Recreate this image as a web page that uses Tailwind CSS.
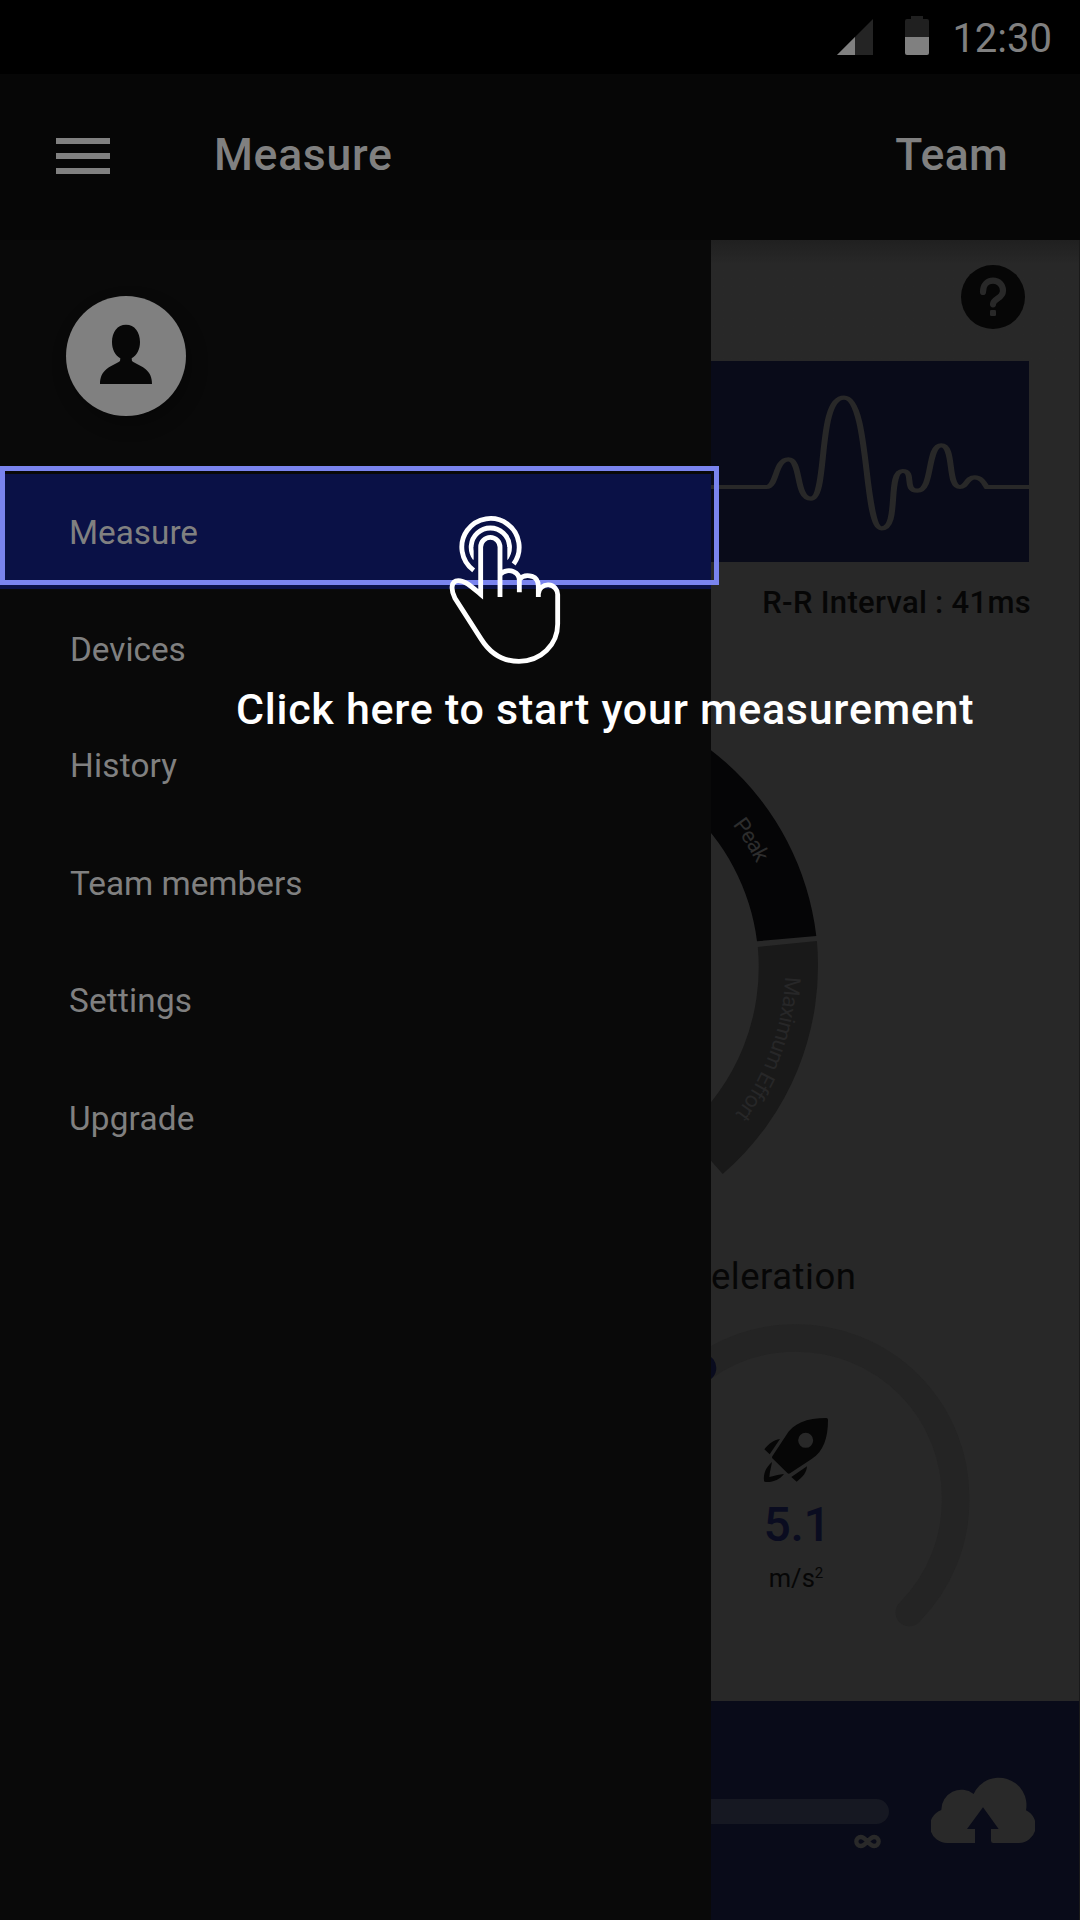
<!DOCTYPE html>
<html lang="en">
<head>
<meta charset="utf-8">
<title>Measure</title>
<script src="https://cdn.jsdelivr.net/npm/@tailwindcss/browser@4"></script>
</head>
<body class="bg-black">
<div class="relative flex h-[1920px] w-[1080px] flex-col overflow-hidden bg-black font-['Roboto',sans-serif] text-[#808080]">

  <!-- Status bar -->
  <div class="flex h-[74px] shrink-0 items-center justify-end pr-[28px]">
    <svg class="h-[36px] w-[36px]" viewBox="0 0 36 36"><path d="M0 36 36 0V36Z" fill="#242424"/><path d="M0 36 18 18V36Z" fill="#808080"/></svg>
    <svg class="-mt-[3px] ml-[32px] h-[39px] w-[24px]" viewBox="0 0 24 39"><path d="M6 0H18V3H22Q24 3 24 5V21H0V5Q0 3 2 3H6Z" fill="#202020"/><path d="M0 21H24V37Q24 39 22 39H2Q0 39 0 37Z" fill="#808080"/></svg>
    <span class="ml-[23px] pt-[4px] text-[40px] leading-[70px]">12:30</span>
  </div>

  <!-- App bar -->
  <header class="flex h-[166px] shrink-0 items-center bg-[#060606] pb-[2px] pl-[56px] pr-[72px] text-[44.5px] font-medium leading-none tracking-[0.7px]">
    <div class="flex w-[54px] flex-col gap-[9px]">
      <i class="h-[6px] bg-[#808080]"></i><i class="h-[6px] bg-[#808080]"></i><i class="h-[6px] bg-[#808080]"></i>
    </div>
    <h1 class="-mt-[2px] ml-[104px]">Measure</h1>
    <span class="-mt-[2px] ml-auto tracking-[0.3px]">Team</span>
  </header>

  <div class="flex flex-1">
    <!-- Drawer -->
    <aside class="w-[711px] shrink-0 bg-[#090909]">
      <div class="mt-[56px] ml-[66px] size-[120px] rounded-full bg-[#808080] shadow-[4px_8px_18px_rgba(0,0,0,0.3)]">
        <svg class="size-[120px]" viewBox="198 708 360 360" fill="#070707"><path d="M378 794C404 794 420 816 420 846C420 868 411 886 395 895Q394 903 400 906C412 914 428 919 437 928C450 939 456 953 456 972H300C300 953 306 939 319 928C328 919 344 914 356 906Q362 903 361 895C345 886 336 868 336 846C336 816 352 794 378 794Z"/></svg>
      </div>
      <nav class="mt-[58px] text-[33.3px]">
        <a class="flex h-[115px] items-center bg-[#0a1146] pt-[2px] pl-[69px]">Measure</a>
        <a class="flex h-[117px] items-center pt-[4px] pl-[70px]">Devices</a>
        <a class="flex h-[117px] items-center pt-[2px] pl-[70px] tracking-[0.2px]">History</a>
        <a class="flex h-[117px] items-center pt-[4px] pl-[70px]">Team members</a>
        <a class="flex h-[118px] items-center pt-[4px] pl-[69px] tracking-[0.2px]">Settings</a>
        <a class="flex h-[117px] items-center pt-[4px] pl-[69px] tracking-[0.2px]">Upgrade</a>
      </nav>
    </aside>

    <!-- Dashboard -->
    <main class="flex w-[369px] flex-col overflow-hidden border-r border-[#1a1a1a] bg-[#282828] text-[#060606]">
      <div class="flex h-[121px] shrink-0 justify-end bg-linear-to-b from-[#202020] to-[#282828] to-20% pt-[25px] pr-[54px]">
        <svg class="size-[64px]" viewBox="783 105 192 192"><circle cx="879" cy="201" r="96" fill="#060606"/><path d="M849 186C849 164 862 152 879 152S909 165 909 182C909 207 879 204 879 223" fill="none" stroke="#282828" stroke-width="18.500" stroke-linecap="round"/><rect x="870" y="240" width="18" height="18" rx="4" fill="#282828"/></svg>
      </div>
      <svg class="h-[201px] w-[318px] shrink-0 bg-[#090b19]" viewBox="33 393 954 603"><path transform="scale(1.45 1)" d="M22 771H137.900C158.600 771 155.200 688 182.800 688C210.300 688 196.600 806 229.700 806C265.500 806 241.400 503 297.900 503C351.700 503 337.900 895 375.900 895C413.800 895 386.200 723 419.300 723C444.800 723 420.700 782 449.700 782C482.800 782 469 646 499.300 646C527.600 646 510.300 771 537.900 771C551.700 771 551.700 742 568.300 742C580.700 742 586.200 755 593.100 771H681" fill="none" stroke="#282828" stroke-width="12.500"/></svg>
      <p class="mt-[21px] pr-[48px] text-right text-[31px] font-medium leading-[40px] tracking-[0.3px] whitespace-nowrap">R-R Interval : 41ms</p>

      <svg class="mt-[107px] h-[460px] w-[130px] shrink-0" viewBox="711 730 130 460">
        <path d="M543 693A275 275 0 0 1 816.300 936L757 941.300A215 215 0 0 0 543 753Z" fill="#050506"/>
        <path d="M816.900 941A275 275 0 0 1 722.700 1174L684 1130A215 215 0 0 0 757.800 947Z" fill="#191919"/>
        <path id="peak" d="M732.400 824.500A238.500 238.500 0 0 1 781.500 968" fill="none"/>
        <path id="effort" d="M785 976.500A241.500 241.500 0 0 1 700 1151" fill="none"/>
        <text font-size="22" fill="#2d2d2d" textLength="46"><textPath href="#peak">Peak</textPath></text>
        <text font-size="22" fill="#272728" textLength="149"><textPath href="#effort">Maximum Effort</textPath></text>
      </svg>

      <p class="mt-[64px] w-[144px] text-right text-[36.5px] leading-[46px] tracking-[0.5px]">eleration</p>

      <div class="relative mt-[20px] h-[320px] w-[270px]">
        <svg class="absolute inset-0 h-[320px] w-[270px]" viewBox="711 1320 270 320" fill="none"><path d="M702.300 1368A159.300 159.300 0 0 1 796.300 1338A159.300 159.300 0 0 1 955.600 1498A159.300 159.300 0 0 1 909.300 1612.500" stroke="#242424" stroke-width="27.500" stroke-linecap="round"/><path d="M702.300 1368A159.300 159.300 0 0 0 684 1384" stroke="#090b1e" stroke-width="28" stroke-linecap="round"/></svg>
        <div class="relative flex w-[170px] flex-col items-center pt-[97px]">
          <svg class="h-[66px] w-[66px]" viewBox="219 531 198 198" fill="#060606"><path fill-rule="evenodd" d="M409 534Q414 534 414 539C414 595 400 634 366 656L300 700Q296 703 292 699L247 655Q245 652 247 649L287 588C309 550 350 534 409 534ZM347 578.500A22.500 22.500 0 1 0 347 623.500A22.500 22.500 0 1 0 347 578.500Z"/><path d="M270 597 239 643 223 628C237 611 250 600 270 597ZM351 679 304 711 320 725C339 711 350 697 351 679ZM246 666C228 682 220 700 222 722Q222 726 228 726C250 727 270 718 282 702C268 703 250 708 238 711C239 695 244 680 246 666Z"/></svg>
          <strong class="mt-[13px] ml-[2px] text-[48px] leading-[58px] font-medium tracking-[-0.3px] text-[#0a0c20]">5.1</strong>
          <span class="mt-[8px] text-[25.5px] leading-[32px]">m/s<sup class="-top-[9px] text-[15px] leading-none">2</sup></span>
        </div>
      </div>

      <!-- Session progress -->
      <footer class="mt-auto flex h-[219px] shrink-0 bg-[#090b19]">
        <div class="w-[178px] pt-[98px]">
          <div class="h-[25px] rounded-r-full bg-[#161822]"></div>
          <svg class="mt-[8px] ml-[141px] h-[20px] w-[32px]" viewBox="0 0 32 20" fill="none" stroke="#292929" stroke-width="4.300"><path d="M15.500 9.500C12.500 6 11 5 8.800 5A4.500 4.500 0 0 0 8.800 14C11 14 12.500 13 15.500 9.500C18.500 6 20 5 22.200 5A4.500 4.500 0 0 1 22.200 14C20 14 18.500 13 15.500 9.500Z"/></svg>
        </div>
        <svg class="mt-[76px] ml-[42px] h-[68px] w-[104px]" viewBox="693 291 312 204"><path fill="#292929" d="M743 489A51 51 0 0 1 724 390A60 60 0 0 1 821 342A82.800 82.800 0 0 1 978 391A51.500 51.500 0 0 1 957 489H880Q873 489 873 482V447H896L849 382 801 447H825V489Z"/></svg>
      </footer>
    </main>
  </div>

  <!-- Coach mark -->
  <div class="absolute top-[466px] left-0 h-[119px] w-[719px] border-[5px] border-[#7a84ee]"></div>
  <svg class="absolute top-[515px] left-[449px] h-[150px] w-[112px]" viewBox="87 195 336 450" fill="none" stroke="#fff" stroke-width="14.500">
    <clipPath id="rings"><path d="M87 195H423V645H262V291H161V645H87Z"/></clipPath>
    <path d="M161 361A86 86 0 1 1 281 342"/>
    <g clip-path="url(#rings)"><path d="M165 326A57.500 57.500 0 1 1 257 326"/></g>
    <path d="M240 441V291A29 29 0 0 0 182 291V433C158 413 138 392 115 392C92 392 92 420 105 445L184 568C212 612 250 634 297 634C362 634 413 585 413 522V435A29 29 0 0 0 355 432V441M240 374C252 360 270 360 281 365Q298 372 298 391V427M298 388C310 374 325 376 336 379Q355 386 355 408V441" stroke-miterlimit="8"/>
  </svg>
  <p class="absolute top-[683px] left-[236px] text-[43px] leading-[52px] font-medium tracking-[0.73px] whitespace-nowrap text-white">Click here to start your measurement</p>
</div>
</body>
</html>
